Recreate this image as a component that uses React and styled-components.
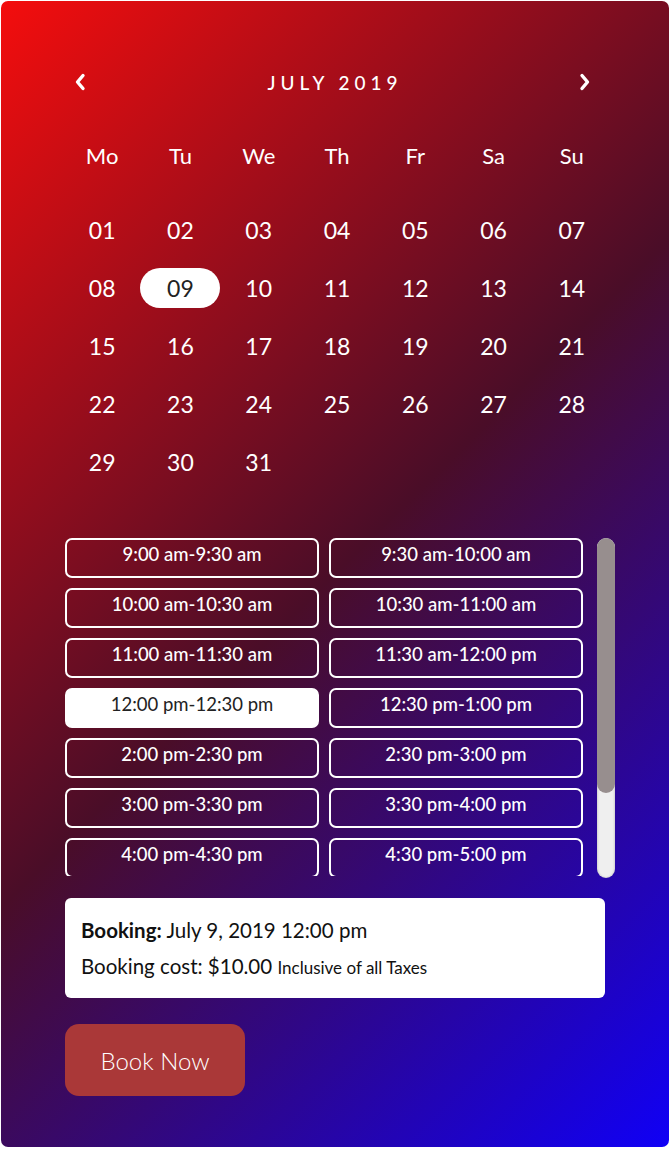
import React, { useState } from "react";
import styled, { createGlobalStyle } from "styled-components";

const GlobalStyle = createGlobalStyle`
    html, body {
        margin: 0;
        padding: 0;
        background: #fff;
    }
    body {
        font-family: "Lato", "Open Sans", sans-serif;
    }
`;

const Page = styled.div`
    padding: 1px;
`;

const Card = styled.div`
    width: 668px;
    height: 1146px;
    box-sizing: border-box;
    padding: 61px 0 0 62px;
    border-radius: 7px;
    background: linear-gradient(135deg, #f40d0d 0%, #4a0d28 50%, #1000f6 100%);
    color: #fff;
`;

const Header = styled.div`
    display: flex;
    align-items: center;
    justify-content: space-between;
    width: 548px;
    height: 40px;
    padding: 0 20px 0 11px;
    box-sizing: border-box;
`;

const Arrow = styled.svg`
    width: 12px;
    height: 18px;
    cursor: pointer;
`;

const Month = styled.div`
    font-size: 19px;
    font-weight: 500;
    letter-spacing: 5px;
    margin-right: -5px;
`;

const Grid = styled.div`
    display: grid;
    grid-template-columns: repeat(7, minmax(0, 1fr));
    width: 548px;
    margin-top: ${p => p.$top}px;
`;

const DayName = styled.div`
    height: 58px;
    display: flex;
    align-items: center;
    justify-content: center;
    font-size: 22px;
`;

const DateCell = styled.div`
    height: 58px;
    display: flex;
    align-items: center;
    justify-content: center;
`;

const DateLabel = styled.span`
    width: 80px;
    height: 40px;
    flex-shrink: 0;
    border-radius: 20px;
    display: flex;
    align-items: center;
    justify-content: center;
    font-size: 23px;
    background: ${p => (p.$active ? "#fff" : "transparent")};
    color: ${p => (p.$active ? "#222" : "#fff")};
    cursor: pointer;
`;

const SlotArea = styled.div`
    display: flex;
    gap: 14px;
    margin-top: 47px;
    margin-left: 2px;
`;

const SlotScroller = styled.div`
    width: 518px;
    height: 338px;
    overflow-y: auto;
    scrollbar-width: none;

    &::-webkit-scrollbar {
        display: none;
    }
`;

const SlotGrid = styled.div`
    display: grid;
    grid-template-columns: 1fr 1fr;
    gap: 10px;
`;

const Slot = styled.button`
    height: 40px;
    box-sizing: border-box;
    border: 2px solid #fff;
    border-radius: 7px;
    padding: 0 0 8px;
    font-family: inherit;
    font-size: 18.5px;
    font-weight: ${p => (p.$active ? 400 : 500)};
    line-height: 28px;
    text-align: center;
    background: ${p => (p.$active ? "#fff" : "transparent")};
    color: ${p => (p.$active ? "#222" : "#fff")};
    cursor: pointer;
`;

const ScrollTrack = styled.div`
    width: 18px;
    height: 340px;
    border-radius: 9px;
    background: #efefef;
    box-shadow: inset 1px 0 2px rgba(0, 0, 0, 0.12), inset -1px 0 2px rgba(0, 0, 0, 0.12);
    overflow: hidden;
`;

const ScrollThumb = styled.div`
    height: 255px;
    border-radius: 9px;
    background: #978e8e;
`;

const Summary = styled.div`
    margin-top: 20px;
    margin-left: 2px;
    width: 540px;
    height: 100px;
    box-sizing: border-box;
    padding: 17px 16px 0;
    background: #fff;
    border-radius: 6px;
    color: #111;
    font-size: 20.5px;
`;

const Line = styled.div`
    line-height: 30px;
    margin-bottom: 6px;
`;

const Small = styled.span`
    font-size: 17px;
`;

const BookButton = styled.button`
    margin-top: 26px;
    margin-left: 2px;
    width: 180px;
    height: 72px;
    border: none;
    border-radius: 14px;
    background: #aa3838;
    color: #fff;
    font-family: inherit;
    font-size: 24px;
    font-weight: 300;
    cursor: pointer;
`;

const days = ["Mo", "Tu", "We", "Th", "Fr", "Sa", "Su"];
const dates = Array.from({ length: 31 }, (_, i) => String(i + 1).padStart(2, "0"));

const slots = [
    "9:00 am-9:30 am", "9:30 am-10:00 am",
    "10:00 am-10:30 am", "10:30 am-11:00 am",
    "11:00 am-11:30 am", "11:30 am-12:00 pm",
    "12:00 pm-12:30 pm", "12:30 pm-1:00 pm",
    "2:00 pm-2:30 pm", "2:30 pm-3:00 pm",
    "3:00 pm-3:30 pm", "3:30 pm-4:00 pm",
    "4:00 pm-4:30 pm", "4:30 pm-5:00 pm",
    "5:00 pm-5:30 pm", "5:30 pm-6:00 pm",
    "6:00 pm-6:30 pm", "6:30 pm-7:00 pm",
];

export default () => {
    const [day, setDay] = useState("09");
    const [slot, setSlot] = useState("12:00 pm-12:30 pm");

    return (
        <Page>
            <GlobalStyle />
            <Card>
                <Header>
                    <Arrow viewBox="0 0 12 18">
                        <polyline points="9,2.5 3.5,9 9,15.5" fill="none" stroke="#fff" strokeWidth="3.4" strokeLinecap="round" strokeLinejoin="round" />
                    </Arrow>
                    <Month>JULY 2019</Month>
                    <Arrow viewBox="0 0 12 18">
                        <polyline points="3,2.5 8.5,9 3,15.5" fill="none" stroke="#fff" strokeWidth="3.4" strokeLinecap="round" strokeLinejoin="round" />
                    </Arrow>
                </Header>

                <Grid $top={24}>
                    {days.map(d => <DayName key={d}>{d}</DayName>)}
                </Grid>

                <Grid $top={17}>
                    {dates.map(d =>
                        <DateCell key={d}>
                            <DateLabel $active={d === day} onClick={() => setDay(d)}>{d}</DateLabel>
                        </DateCell>
                    )}
                </Grid>

                <SlotArea>
                    <SlotScroller>
                        <SlotGrid>
                            {slots.map(s =>
                                <Slot key={s} $active={s === slot} onClick={() => setSlot(s)}>{s}</Slot>
                            )}
                        </SlotGrid>
                    </SlotScroller>
                    <ScrollTrack>
                        <ScrollThumb />
                    </ScrollTrack>
                </SlotArea>

                <Summary>
                    <Line><b>Booking:</b> July 9, 2019 12:00 pm</Line>
                    <Line>Booking cost: $10.00 <Small>Inclusive of all Taxes</Small></Line>
                </Summary>

                <BookButton>Book Now</BookButton>
            </Card>
        </Page>
    );
};
